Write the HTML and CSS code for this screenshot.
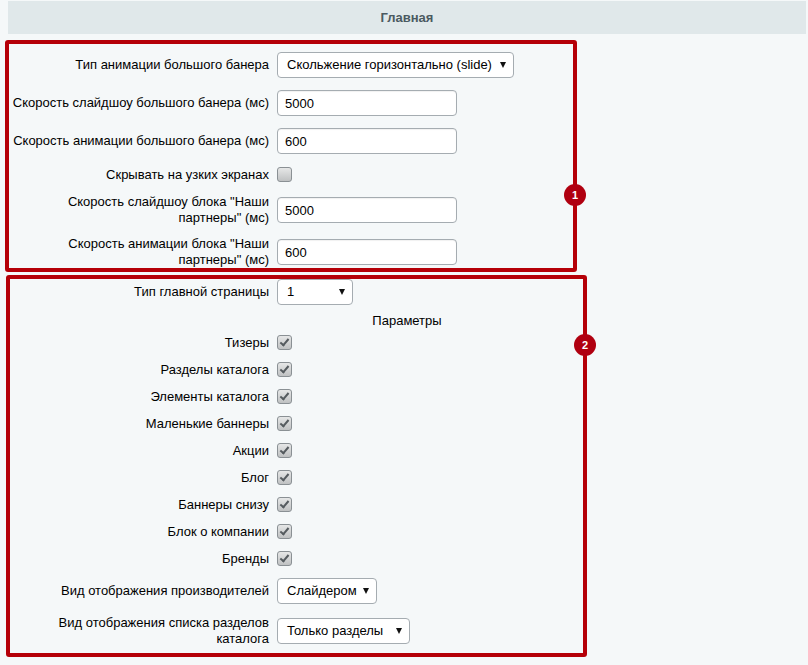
FILE: index.html
```html
<!DOCTYPE html>
<html>
<head>
    <meta charset="utf-8">
    <title>Главная</title>
    <link rel="stylesheet" href="styles.css">
</head>
<body>
    <div class="page">
        <div class="section-title">Главная</div>

        <div class="form">
            <div class="group">
                <div class="row">
                    <div class="label">Тип анимации большого банера</div>
                    <div class="field"><div class="select select-anim"><span>Скольжение горизонтально (slide)</span></div></div>
                </div>
                <div class="row">
                    <div class="label">Скорость слайдшоу большого банера (мс)</div>
                    <div class="field"><input class="text" type="text" value="5000"></div>
                </div>
                <div class="row">
                    <div class="label">Скорость анимации большого банера (мс)</div>
                    <div class="field"><input class="text" type="text" value="600"></div>
                </div>
                <div class="row check check-first">
                    <div class="label">Скрывать на узких экранах</div>
                    <div class="field"><span class="box"></span></div>
                </div>
                <div class="row tall">
                    <div class="label">Скорость слайдшоу блока "Наши партнеры" (мс)</div>
                    <div class="field"><input class="text" type="text" value="5000"></div>
                </div>
                <div class="row tall">
                    <div class="label">Скорость анимации блока "Наши партнеры" (мс)</div>
                    <div class="field"><input class="text" type="text" value="600"></div>
                </div>
            </div>

            <div class="group">
                <div class="row">
                    <div class="label">Тип главной страницы</div>
                    <div class="field"><div class="select select-type"><span>1</span></div></div>
                </div>
                <div class="subhead">Параметры</div>
                <div class="row check">
                    <div class="label">Тизеры</div>
                    <div class="field"><span class="box checked"></span></div>
                </div>
                <div class="row check">
                    <div class="label">Разделы каталога</div>
                    <div class="field"><span class="box checked"></span></div>
                </div>
                <div class="row check">
                    <div class="label">Элементы каталога</div>
                    <div class="field"><span class="box checked"></span></div>
                </div>
                <div class="row check">
                    <div class="label">Маленькие баннеры</div>
                    <div class="field"><span class="box checked"></span></div>
                </div>
                <div class="row check">
                    <div class="label">Акции</div>
                    <div class="field"><span class="box checked"></span></div>
                </div>
                <div class="row check">
                    <div class="label">Блог</div>
                    <div class="field"><span class="box checked"></span></div>
                </div>
                <div class="row check">
                    <div class="label">Баннеры снизу</div>
                    <div class="field"><span class="box checked"></span></div>
                </div>
                <div class="row check">
                    <div class="label">Блок о компании</div>
                    <div class="field"><span class="box checked"></span></div>
                </div>
                <div class="row check">
                    <div class="label">Бренды</div>
                    <div class="field"><span class="box checked"></span></div>
                </div>
                <div class="row">
                    <div class="label">Вид отображения производителей</div>
                    <div class="field"><div class="select select-brands"><span>Слайдером</span></div></div>
                </div>
                <div class="row tall">
                    <div class="label">Вид отображения списка разделов каталога</div>
                    <div class="field"><div class="select select-sections"><span>Только разделы</span></div></div>
                </div>
            </div>
        </div>
    </div>

    <!-- highlighted blocks with numbered markers -->
    <div class="mark mark-1"><span class="badge">1</span></div>
    <div class="mark mark-2"><span class="badge">2</span></div>
</body>
</html>
```

FILE: styles.css
```css
body {
    margin: 0;
    background-color: #f5f8f9;
    font-family: "Liberation Sans", Arial, sans-serif;
    font-size: 13px;
    color: #000;
}
.page {
    width: 798px;
    padding: 1px 2px 0 8px;
}
.section-title {
    height: 33px;
    line-height: 33px;
    text-align: center;
    background-color: #e0e8ea;
    color: #4b5a61;
    font-weight: bold;
}
.form {
    margin-top: 12px;
}
.row {
    display: grid;
    grid-template-columns: 261px 1fr;
    column-gap: 8px;
    align-items: center;
    padding: 6px 0;
    line-height: 16px;
}
.row.tall {
    padding: 5px 0;
}
.row.check {
    padding: 0;
    height: 27px;
}
.row.check-first {
    height: 29px;
}
.label {
    text-align: right;
}
.field {
    display: flex;
    align-items: center;
}
.subhead {
    padding-top: 2px;
    line-height: 16px;
    text-align: center;
}

/* inputs */
.text {
    box-sizing: border-box;
    width: 180px;
    height: 26px;
    margin: 0;
    padding: 0 7px;
    border: 1px solid #a5acb1;
    border-radius: 4px;
    background: #fff;
    box-shadow: inset 0 1px 1px rgba(0, 0, 0, 0.06);
    font-family: inherit;
    font-size: 13px;
    color: #000;
}
.select {
    box-sizing: border-box;
    display: flex;
    align-items: center;
    justify-content: space-between;
    height: 26px;
    padding: 0 7px 0 9px;
    border: 1px solid #a5acb1;
    border-radius: 4px;
    background: #fff;
}
.select::after {
    content: "";
    border-left: 3px solid transparent;
    border-right: 3px solid transparent;
    border-top: 6px solid #111;
}
.select-anim { width: 237px; }
.select-type { width: 76px; }
.select-brands { width: 100px; }
.select-sections { width: 133px; }

.box {
    box-sizing: border-box;
    position: relative;
    width: 15px;
    height: 15px;
    border: 1px solid #8a9094;
    border-radius: 3px;
    background: linear-gradient(#e6e7e7, #bfc1c2);
}
.box.checked::after {
    content: "";
    position: absolute;
    left: 4px;
    top: 1px;
    width: 3px;
    height: 7px;
    border-right: 2px solid #555b5f;
    border-bottom: 2px solid #555b5f;
    transform: rotate(40deg);
}

/* red frames drawn over the form */
.mark {
    position: absolute;
    box-sizing: border-box;
    border: 4px solid #b50008;
    border-radius: 3px;
}
.mark-1 {
    left: 5px;
    top: 40px;
    width: 572px;
    height: 232px;
}
.mark-2 {
    left: 6px;
    top: 275px;
    width: 581px;
    height: 382px;
}
.badge {
    position: absolute;
    right: -13px;
    width: 22px;
    height: 22px;
    border-radius: 50%;
    background-color: #b00010;
    color: #fff;
    font-size: 11px;
    font-weight: bold;
    line-height: 22px;
    text-align: center;
}
.mark-1 .badge { top: 140px; }
.mark-2 .badge { top: 55px; }
```
